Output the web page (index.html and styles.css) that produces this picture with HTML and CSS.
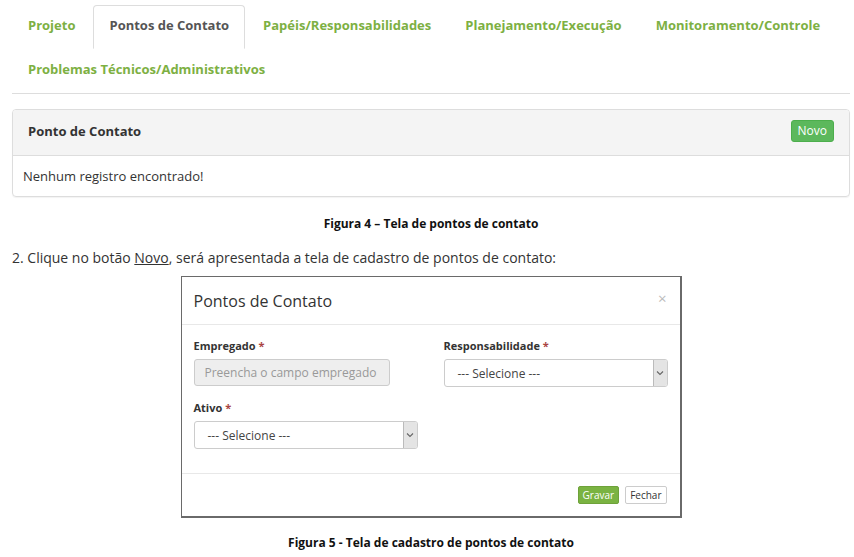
FILE: index.html
```html
<!DOCTYPE html>
<html lang="pt">
<head>
<meta charset="utf-8">
<link rel="stylesheet" href="styles.css">
</head>
<body>
<div class="page">
  <ul class="tabs">
    <li class="tab"><a>Projeto</a></li>
    <li class="tab active"><a>Pontos de Contato</a></li>
    <li class="tab"><a>Papéis/Responsabilidades</a></li>
    <li class="tab"><a>Planejamento/Execução</a></li>
    <li class="tab"><a>Monitoramento/Controle</a></li>
    <li class="tab"><a>Problemas Técnicos/Administrativos</a></li>
  </ul>

  <div class="panel">
    <div class="panel-head">
      <span class="panel-title">Ponto de Contato</span>
      <span class="btn-novo">Novo</span>
    </div>
    <div class="panel-body">Nenhum registro encontrado!</div>
  </div>

  <p class="caption cap1">Figura 4 – Tela de pontos de contato</p>

  <p class="step">2. Clique no botão <u>Novo</u>, será apresentada a tela de cadastro de pontos de contato:</p>

  <div class="modal">
    <div class="modal-head">
      <span class="modal-title">Pontos de Contato</span>
      <span class="close">×</span>
    </div>
    <div class="modal-body">
      <div class="field">
        <div class="label">Empregado <span class="req">*</span></div>
        <div class="input">Preencha o campo empregado</div>
      </div>
      <div class="field">
        <div class="label">Responsabilidade <span class="req">*</span></div>
        <div class="select"><span class="sel-text">--- Selecione ---</span><span class="arrow"><svg width="8" height="6" viewBox="0 0 8 6"><path d="M1 1.5 L4 4.5 L7 1.5" fill="none" stroke="#666" stroke-width="1.1"/></svg></span></div>
      </div>
      <div class="field">
        <div class="label">Ativo <span class="req">*</span></div>
        <div class="select"><span class="sel-text">--- Selecione ---</span><span class="arrow"><svg width="8" height="6" viewBox="0 0 8 6"><path d="M1 1.5 L4 4.5 L7 1.5" fill="none" stroke="#666" stroke-width="1.1"/></svg></span></div>
      </div>
    </div>
    <div class="modal-foot">
      <span class="btn btn-gravar">Gravar</span>
      <span class="btn btn-fechar">Fechar</span>
    </div>
  </div>

  <p class="caption cap2">Figura 5 - Tela de cadastro de pontos de contato</p>
</div>
</body>
</html>
```

FILE: styles.css
```css
* { box-sizing: border-box; }
html, body { margin: 0; padding: 0; background: #fff; }
body {
  font-family: "Open Sans", "Noto Sans", Arial, sans-serif;
  color: #333;
}
.page {
  padding: 5px 4px 0 12px;
}
.tabs {
  list-style: none;
  margin: 0;
  padding: 0;
  display: flex;
  flex-wrap: wrap;
  border-bottom: 1px solid #ddd;
}
.tab {
  margin-right: 2px;
}
.tab a {
  display: block;
  height: 44px;
  padding: 0 15px;
  line-height: 38px;
  font-size: 13px;
  font-weight: 700;
  color: #7db043;
  border: 1px solid transparent;
  border-radius: 4px 4px 0 0;
}
.tab.active a {
  color: #555;
  border-color: #ddd;
  border-bottom-color: transparent;
  background: #fff;
}
.panel {
  margin-top: 15px;
  border: 1px solid #ddd;
  border-radius: 4px;
  box-shadow: 0 1px 1px rgba(0,0,0,0.05);
}
.panel-head {
  height: 46px;
  background: #f4f4f4;
  border-bottom: 1px solid #ddd;
  border-radius: 3px 3px 0 0;
  display: flex;
  align-items: center;
  justify-content: space-between;
  padding: 0 15px 0 15px;
}
.panel-title {
  font-size: 13px;
  font-weight: 700;
  color: #333;
  margin-top: -4px;
}
.btn-novo {
  background: #5cb85c;
  color: #fff;
  font-size: 12px;
  line-height: 20px;
  padding: 0 6px;
  border-radius: 3px;
  border: 1px solid #4cae4c;
  margin-right: 0;
  margin-top: -3px;
}
.panel-body {
  height: 40px;
  padding: 0 10px;
  line-height: 40px;
  font-size: 13px;
  color: #333;
}
.caption {
  margin: 0;
  text-align: center;
  font-size: 12px;
  font-weight: 700;
  color: #111;
}
.cap1 { margin-top: 18px; line-height: 18px; }
.step {
  margin: 15px 0 0 0;
  font-size: 14px;
  line-height: 20px;
  color: #333;
}
.modal {
  width: 501px;
  height: 242px;
  margin: 8px auto 0 auto;
  border: 1px solid #6a6a6a;
  border-right-width: 2px;
  border-bottom-width: 2px;
  background: #fff;
  display: flex;
  flex-direction: column;
}
.modal-head {
  height: 48px;
  border-bottom: 1px solid #e8e8e8;
  display: flex;
  align-items: center;
  justify-content: space-between;
  padding: 0 12px 0 12px;
}
.modal-title {
  font-size: 16px;
  color: #333;
  margin-top: 1px;
}
.close {
  font-size: 15px;
  color: #bbb;
  margin-top: -6px;
  margin-right: 1px;
}
.modal-body {
  flex: 1;
  display: grid;
  grid-template-columns: 224px 224px;
  column-gap: 26px;
  row-gap: 13px;
  padding: 13px 12px 0 12px;
  align-content: start;
}
.field { display: flex; flex-direction: column; }
.label {
  font-size: 11px;
  font-weight: 700;
  color: #333;
  line-height: 16px;
  margin-bottom: 5px;
}
.req { color: #a94442; }
.input {
  width: 196px;
  height: 27px;
  background: #eee;
  border: 1px solid #ccc;
  border-radius: 3px;
  font-size: 12px;
  color: #999;
  line-height: 25px;
  padding: 0 10px;
}
.select {
  width: 224px;
  height: 28px;
  border: 1px solid #ccc;
  border-radius: 3px;
  display: flex;
  align-items: center;
  justify-content: space-between;
  padding-left: 13px;
  overflow: hidden;
}
.sel-text {
  font-size: 12px;
  color: #444;
}
.arrow {
  width: 14px;
  height: 100%;
  background: #e4e4e4;
  border-left: 1px solid #bbb;
  display: flex;
  align-items: center;
  justify-content: center;
}
.modal-foot {
  height: 43px;
  border-top: 1px solid #e8e8e8;
  display: flex;
  justify-content: flex-end;
  align-items: center;
  gap: 6px;
  padding: 0 13px 0 0;
}
.btn {
  font-size: 10px;
  line-height: 16px;
  padding: 0 4px;
  border-radius: 2px;
  border: 1px solid;
}
.btn-gravar {
  background: #7ab342;
  border-color: #6ea23a;
  color: #fff;
}
.btn-fechar {
  background: #fff;
  border-color: #ccc;
  color: #333;
}
.cap2 { margin-top: 17px; line-height: 16px; }
```
